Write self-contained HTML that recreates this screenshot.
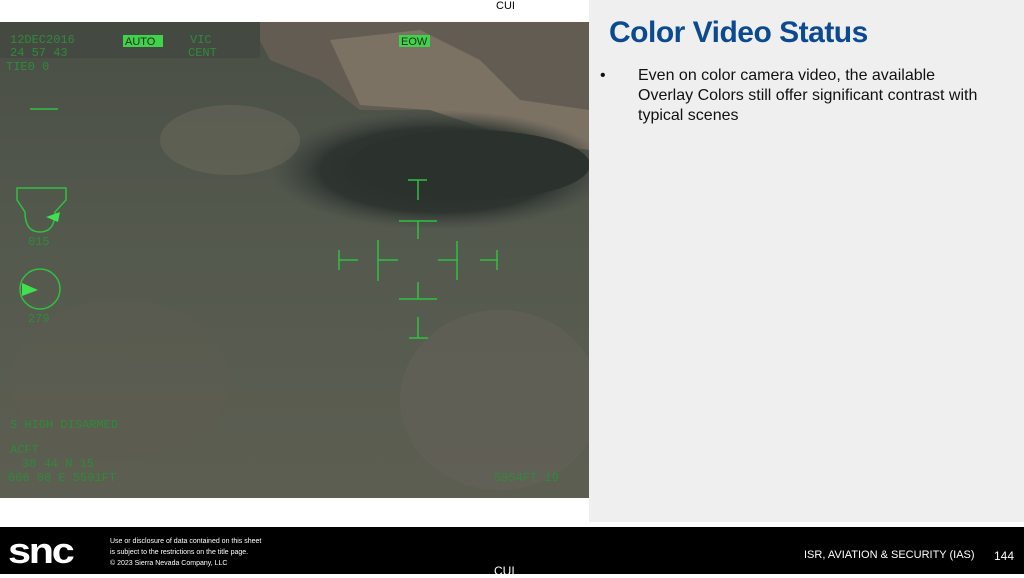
<!DOCTYPE html>
<html><head><meta charset="utf-8"><style>
body{margin:0;width:1024px;height:574px;background:#fff;position:relative;overflow:hidden;font-family:"Liberation Sans",sans-serif}
.cui{position:absolute;font-size:11px;color:#000;left:496px}
#panel{position:absolute;left:589px;top:0;width:435px;height:522px;background:#efefef}
h1{position:absolute;left:609px;top:16px;margin:0;font-size:30px;font-weight:bold;color:#0b4a90;letter-spacing:-0.5px}
.b{position:absolute;left:600px;top:66px;font-size:16px;line-height:20px;color:#111;width:420px}
.b span{position:absolute;left:38px;top:0;width:380px;white-space:nowrap}
#foot{position:absolute;left:0;top:527px;width:1024px;height:47px;background:#000;color:#fff}
</style></head><body>
<div class="cui" style="top:0">CUI</div>
<div id="panel"></div>
<h1>Color Video Status</h1>
<div class="b">•<span>Even on color camera video, the available<br>Overlay Colors still offer significant contrast with<br>typical scenes</span></div>
<svg style="position:absolute;left:0;top:22px" width="589" height="476" viewBox="0 22 589 476">
<defs>
<radialGradient id="lake" cx="0.5" cy="0.5" r="0.5"><stop offset="0" stop-color="#262c29"/><stop offset="0.7" stop-color="#2e3530"/><stop offset="1" stop-color="#3e4540" stop-opacity="0"/></radialGradient>
<linearGradient id="bg" x1="0" y1="0" x2="0" y2="1"><stop offset="0" stop-color="#4a4f47"/><stop offset="0.5" stop-color="#555a4e"/><stop offset="1" stop-color="#5d5e52"/></linearGradient>
</defs>
<rect x="0" y="22" width="589" height="476" fill="url(#bg)"/>
<path d="M250 22 L589 22 L589 150 L520 140 L430 110 L360 110 L320 80 L270 60 Z" fill="#625c52"/>
<path d="M330 40 L420 30 L480 60 L520 100 L589 110 L589 150 L520 140 L430 110 L360 105 Z" fill="#7c7264"/>
<ellipse cx="440" cy="170" rx="170" ry="60" fill="url(#lake)"/>
<ellipse cx="470" cy="165" rx="120" ry="35" fill="#2b322e"/>
<ellipse cx="230" cy="140" rx="70" ry="35" fill="#6c6a5c" opacity="0.5"/>
<ellipse cx="500" cy="400" rx="100" ry="90" fill="#6a655c" opacity="0.4"/>
<ellipse cx="120" cy="380" rx="110" ry="80" fill="#5f5d52" opacity="0.4"/>
<rect x="0" y="22" width="260" height="36" fill="#444a42"/>
<g fill="#2f8a3a" font-family="Liberation Mono,monospace" font-size="12">
<text x="10" y="43">12DEC2016</text><text x="10" y="56">24 57 43</text><text x="6" y="70">TIE0 0</text>
<text x="190" y="43">VIC</text><text x="188" y="56">CENT</text>
<text x="10" y="428">S HIGH  DISARMED</text>
<text x="10" y="453">ACFT</text><text x="22" y="467">38 44 N    15</text><text x="8" y="481">006 08 E    5591FT</text>
<text x="494" y="481">5954FT 19</text>
<text x="28" y="245">015</text><text x="28" y="322">279</text>
</g>
<rect x="123" y="35" width="40" height="12" fill="#3fd24a"/>
<text x="125" y="45" font-family="Liberation Sans" font-size="11" fill="#203020">AUTO</text>
<rect x="399" y="35" width="31" height="12" fill="#3fd24a"/>
<text x="401" y="45" font-family="Liberation Sans" font-size="11" fill="#203020">EOW</text>
<g stroke="#30c040" stroke-width="1.5" fill="none">
<path d="M408 180H427M418 180V200M399 221H437M418 221V239M339 250V270M339 260H358M378 240V281M378 260H398M438 260H458M457 241V280M480 260H498M497 250V270M399 299H437M418 282V299M418 317V338M409 338H428"/>
<path d="M17 188H66V200L55 212Q55 232 40 232Q25 232 25 212L17 200Z"/>
<circle cx="40" cy="289" r="20"/>
<path d="M30 109H58"/>
</g>
<path d="M46 217L60 212L58 222Z" fill="#40e050"/>
<path d="M22 283L38 290L22 296Z" fill="#40e050"/>
</svg>
<div id="foot">
<div style="position:absolute;left:8px;top:3px;font-size:36px;font-weight:bold;letter-spacing:-2px;font-family:'Liberation Sans',sans-serif;transform:scaleX(1.15);transform-origin:left">snc</div>
<div style="position:absolute;left:110px;top:9px;font-size:7px;line-height:11px">Use or disclosure of data contained on this sheet<br>is subject to the restrictions on the title page.<br>© 2023 Sierra Nevada Company, LLC</div>
<div style="position:absolute;left:804px;top:22px;font-size:11px">ISR, AVIATION &amp; SECURITY (IAS)</div>
<div style="position:absolute;left:994px;top:22px;font-size:12px">144</div>
<div style="position:absolute;left:494px;top:37px;font-size:12px">CUI</div>
</div>
</body></html>
